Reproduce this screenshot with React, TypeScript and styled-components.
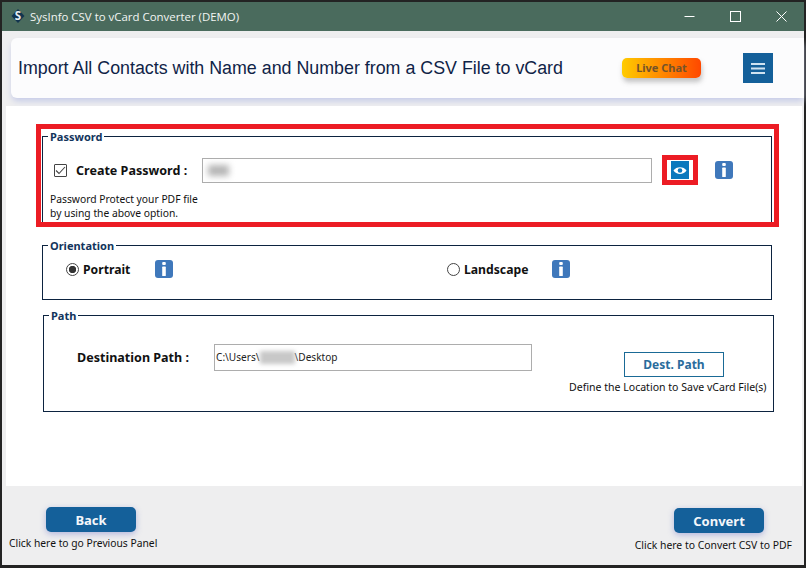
import React from 'react';
import styled, {createGlobalStyle} from 'styled-components';

const GlobalStyle = createGlobalStyle`
  html, body {
    margin: 0;
    padding: 0;
    background: #232323;
  }
  * {
    box-sizing: border-box;
  }
`;

const bodyFont = `"Noto Sans", "DejaVu Sans", sans-serif`;

const InfoIcon = () => (
  <InfoBox>
    <svg width="6" height="14" viewBox="0 0 6 14">
      <rect x="1.2" y="0" width="3.6" height="3" rx="1" fill="#fff" />
      <rect x="1.2" y="4.6" width="3.6" height="9.4" rx="0.6" fill="#fff" />
    </svg>
  </InfoBox>
);

export default function App() {
  return (
    <>
      <GlobalStyle />
      <Window>
        <TitleBar>
          <AppTitle>
            <svg width="14" height="14" viewBox="0 0 14 14">
              <path d="M7 0 L13.5 7 L7 14 L0.5 7 Z" fill="#12344f" />
              <text x="7" y="11" textAnchor="middle" fontSize="11.5" fontWeight="700" fill="#e8eef2" fontFamily="Open Sans, sans-serif">S</text>
            </svg>
            <AppName>SysInfo CSV to vCard Converter (DEMO)</AppName>
          </AppTitle>
          <WindowControls>
            <WindowButton>
              <svg width="11" height="11" viewBox="0 0 11 11">
                <path d="M0.5 5.5 H10.5" stroke="#fff" strokeWidth="1" />
              </svg>
            </WindowButton>
            <WindowButton>
              <svg width="11" height="11" viewBox="0 0 11 11">
                <rect x="0.5" y="0.5" width="10" height="10" fill="none" stroke="#fff" strokeWidth="1" />
              </svg>
            </WindowButton>
            <WindowButton>
              <svg width="11" height="11" viewBox="0 0 11 11">
                <path d="M0.5 0.5 L10.5 10.5 M10.5 0.5 L0.5 10.5" stroke="#fff" strokeWidth="1" />
              </svg>
            </WindowButton>
          </WindowControls>
        </TitleBar>

        <HeaderZone>
          <HeaderCard>
            <Headline>Import All Contacts with Name and Number from a CSV File to vCard</Headline>
            <LiveChat>Live Chat</LiveChat>
            <MenuButton>
              <svg width="14" height="11" viewBox="0 0 14 11">
                <path d="M0 1 H14 M0 5.5 H14 M0 10 H14" stroke="#cfe3f1" strokeWidth="1.8" />
              </svg>
            </MenuButton>
          </HeaderCard>
        </HeaderZone>

        <MainZone>
          <Main>
            <Highlight>
              <PasswordGroup>
                <Legend>Password</Legend>
                <PasswordRow>
                  <CheckBox>
                    <svg width="11" height="9" viewBox="0 0 11 9">
                      <path d="M1 4.5 L4 7.5 L10 1" fill="none" stroke="#444" strokeWidth="1.1" />
                    </svg>
                  </CheckBox>
                  <FieldLabel>Create Password :</FieldLabel>
                  <PasswordInput>
                    <BlurredDots />
                  </PasswordInput>
                  <EyeFrame>
                    <EyeButton>
                      <svg width="14" height="9" viewBox="0 0 14 9">
                        <path d="M0.5 4.5 C3 0 11 0 13.5 4.5 C11 9 3 9 0.5 4.5 Z" fill="#fff" />
                        <circle cx="7" cy="4.5" r="2.3" fill="#0a78bd" />
                      </svg>
                    </EyeButton>
                  </EyeFrame>
                  <InfoIcon />
                </PasswordRow>
                <Hint>
                  Password Protect your PDF file
                  <br />
                  by using the above option.
                </Hint>
              </PasswordGroup>
            </Highlight>

            <OrientationGroup>
              <Legend>Orientation</Legend>
              <OrientationRow>
                <OrientationOption $width={381}>
                  <Radio $checked />
                  <OptionLabel $width={72}>Portrait</OptionLabel>
                  <InfoIcon />
                </OrientationOption>
                <OrientationOption>
                  <Radio />
                  <OptionLabel $width={88}>Landscape</OptionLabel>
                  <InfoIcon />
                </OrientationOption>
              </OrientationRow>
            </OrientationGroup>

            <PathGroup>
              <Legend>Path</Legend>
              <PathRow>
                <PathLabel>Destination Path :</PathLabel>
                <PathInput>
                  C:\Users\<BlurredName />\Desktop
                </PathInput>
                <DestColumn>
                  <DestButton>Dest. Path</DestButton>
                  <Caption $size={10.55}>Define the Location to Save vCard File(s)</Caption>
                </DestColumn>
              </PathRow>
            </PathGroup>
          </Main>
        </MainZone>

        <Footer>
          <FooterAction>
            <PrimaryButton $inset="0 0 0 37px">Back</PrimaryButton>
            <Caption $size={10.3}>Click here to go Previous Panel</Caption>
          </FooterAction>
          <FooterAction $right>
            <PrimaryButton $inset="0 28px 0 0">Convert</PrimaryButton>
            <Caption $size={10.4}>Click here to Convert CSV to PDF</Caption>
          </FooterAction>
        </Footer>
      </Window>
    </>
  );
}

const Window = styled.div`
  width: 806px;
  height: 568px;
  padding: 2px 2px 3px 2px;
  background: #232323;
  display: flex;
  flex-direction: column;
  overflow: hidden;
  font-family: ${bodyFont};
  color: #111;
`;

const TitleBar = styled.div`
  height: 29px;
  flex: none;
  background: #4a6b5d;
  display: flex;
  align-items: center;
  justify-content: space-between;
  padding: 0 17px 1px 9px;
`;

const AppTitle = styled.div`
  display: flex;
  align-items: center;
  gap: 5px;
`;

const AppName = styled.span`
  font-family: "Open Sans", sans-serif;
  font-size: 11.45px;
  color: #f2f5f3;
`;

const WindowControls = styled.div`
  display: flex;
  gap: 35px;
`;

const WindowButton = styled.div`
  width: 11px;
  height: 11px;
  display: flex;
`;

const HeaderZone = styled.div`
  height: 75px;
  flex: none;
  background: #eeeeef;
  padding: 7px 0 8px 9px;
`;

const HeaderCard = styled.div`
  height: 60px;
  background: #fcfcfd;
  border-radius: 6px 0 0 6px;
  box-shadow: 0 4px 6px -1px #c5cbe8;
  display: flex;
  align-items: center;
  padding-left: 7px;
`;

const Headline = styled.h1`
  margin: 0;
  width: 604px;
  font-family: "Liberation Sans", Arial, sans-serif;
  font-size: 17.83px;
  font-weight: 400;
  color: #0f2347;
  white-space: nowrap;
`;

const LiveChat = styled.div`
  width: 79px;
  height: 20px;
  border-radius: 5px;
  background: linear-gradient(90deg, #ffcb00, #ff4800);
  box-shadow: 1px 4px 5px rgba(90, 90, 90, 0.35);
  font-size: 11px;
  font-weight: 700;
  line-height: 19px;
  text-align: center;
  color: #74532a;
`;

const MenuButton = styled.div`
  width: 30px;
  height: 30px;
  margin-left: 42px;
  background: #14609a;
  display: flex;
  align-items: center;
  justify-content: center;
`;

const MainZone = styled.div`
  flex: 1;
  display: flex;
  background: #eeeeef;
  padding: 0 2px 0 4px;
`;

const Main = styled.div`
  flex: 1;
  background: #fff;
  padding-top: 18px;
  display: flex;
  flex-direction: column;
  align-items: flex-start;
`;

const Highlight = styled.div`
  width: 743px;
  height: 103px;
  margin-left: 30px;
  border: 5px solid #ec1c24;
  padding: 0 1px;
  overflow: hidden;
`;

const Group = styled.fieldset`
  margin: 0;
  min-width: 0;
  padding: 0;
  border: 1px solid #0c2340;
`;

const PasswordGroup = styled(Group)`
  width: 730px;
  height: 100px;
  border-bottom: 0;
`;

const OrientationGroup = styled(Group)`
  width: 730px;
  height: 62px;
  margin: 11px 0 0 36px;
`;

const PathGroup = styled(Group)`
  width: 731px;
  height: 104px;
  margin: 8px 0 0 37px;
`;

const Legend = styled.legend`
  margin-left: 5px;
  padding: 0 2px;
  font-size: 11px;
  font-weight: 700;
  line-height: 15px;
  color: #12345c;
`;

const PasswordRow = styled.div`
  display: flex;
  align-items: center;
  height: 30px;
  margin-top: 11px;
  padding-left: 11px;
`;

const CheckBox = styled.div`
  width: 13px;
  height: 13px;
  border: 1px solid #444;
  border-radius: 1px;
  display: flex;
  align-items: center;
  justify-content: center;
  margin-right: 9px;
`;

const FieldLabel = styled.span`
  width: 126px;
  font-size: 12.55px;
  font-weight: 700;
  white-space: nowrap;
`;

const PasswordInput = styled.div`
  width: 450px;
  height: 25px;
  border: 1px solid #adadad;
  display: flex;
  align-items: center;
  padding-left: 5px;
`;

const BlurredDots = styled.span`
  width: 21px;
  height: 11px;
  background: #b5b5b5;
  filter: blur(3px);
`;

const EyeFrame = styled.div`
  width: 36px;
  height: 30px;
  margin: 0 17px 0 10px;
  border: 5px solid #ec1c24;
  display: flex;
  align-items: center;
  justify-content: center;
`;

const EyeButton = styled.div`
  width: 18px;
  height: 18px;
  background: #0a78bd;
  display: flex;
  align-items: center;
  justify-content: center;
`;

const InfoBox = styled.div`
  width: 18px;
  height: 18px;
  flex: none;
  border-radius: 3px;
  background: #3f78bb;
  display: flex;
  align-items: center;
  justify-content: center;
`;

const Hint = styled.div`
  margin: 7px 0 0 7px;
  font-size: 10.3px;
  line-height: 14px;
`;

const OrientationRow = styled.div`
  display: flex;
  padding-left: 23px;
  margin-top: 7px;
`;

const OrientationOption = styled.div<{$width?: number}>`
  display: flex;
  align-items: center;
  width: ${p => (p.$width ? `${p.$width}px` : 'auto')};
`;

const Radio = styled.div<{$checked?: boolean}>`
  width: 13px;
  height: 13px;
  flex: none;
  margin-right: 4px;
  border-radius: 50%;
  border: 1px solid #444;
  background: ${p =>
    p.$checked
      ? 'radial-gradient(circle, #333 0 3.4px, #fff 4px)'
      : '#fff'};
`;

const OptionLabel = styled.span<{$width: number}>`
  width: ${p => p.$width}px;
  font-size: 12.2px;
  font-weight: 700;
`;

const PathRow = styled.div`
  display: flex;
  padding: 21px 0 0 33px;
`;

const PathLabel = styled.span`
  width: 137px;
  height: 27px;
  line-height: 27px;
  font-size: 12.55px;
  font-weight: 700;
  white-space: nowrap;
`;

const PathInput = styled.div`
  width: 318px;
  height: 27px;
  border: 1px solid #adadad;
  padding-left: 1px;
  font-size: 10.1px;
  line-height: 25px;
  color: #222;
`;

const BlurredName = styled.span`
  display: inline-block;
  width: 35px;
  height: 13px;
  vertical-align: -3px;
  background: #c8c8c8;
  filter: blur(2px);
`;

const DestColumn = styled.div`
  width: 198px;
  margin: 8px 0 0 37px;
  display: flex;
  flex-direction: column;
`;

const DestButton = styled.div`
  width: 100px;
  height: 25px;
  margin: 0 0 2px 55px;
  border: 1px solid #1a6a96;
  font-size: 12px;
  font-weight: 700;
  line-height: 23px;
  text-align: center;
  color: #2a6c9c;
`;

const Caption = styled.div<{$size: number}>`
  font-size: ${p => p.$size}px;
  line-height: 16px;
  white-space: nowrap;
`;

const Footer = styled.div`
  height: 79px;
  flex: none;
  background: #eeeeef;
  display: flex;
  justify-content: space-between;
  padding: 21px 12px 0 7px;
`;

const FooterAction = styled.div<{$right?: boolean}>`
  display: flex;
  flex-direction: column;
  align-items: ${p => (p.$right ? 'flex-end' : 'flex-start')};
  gap: ${p => (p.$right ? '4px' : '3px')};
  margin-top: ${p => (p.$right ? '1px' : '0')};
`;

const PrimaryButton = styled.div<{$inset: string}>`
  width: 90px;
  height: 25px;
  margin: ${p => p.$inset};
  border-radius: 5px;
  background: #14609a;
  box-shadow: 0 2px 6px rgba(70, 80, 190, 0.35);
  color: #f4f7fa;
  font-size: 13px;
  font-weight: 700;
  line-height: 26px;
  text-align: center;
`;
